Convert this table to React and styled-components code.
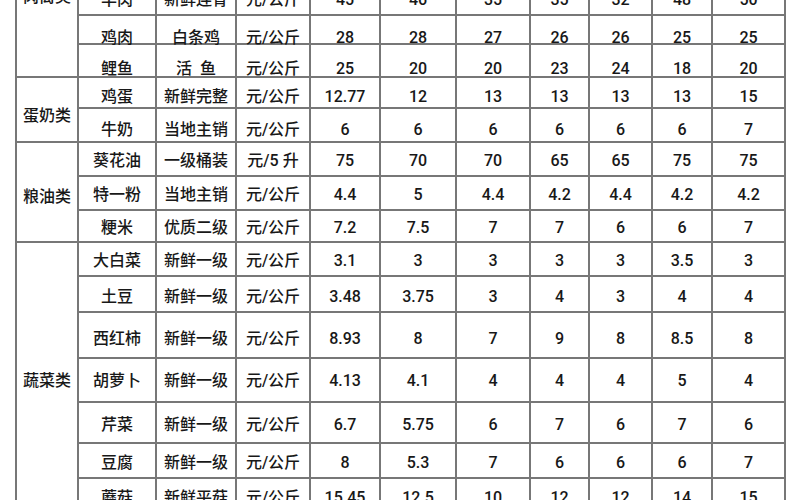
import React from "react";
import styled, { createGlobalStyle } from "styled-components";

const Global = createGlobalStyle`
  html, body { margin: 0; padding: 0; background: #ffffff; overflow: hidden; }
  body { font-family: Roboto, "Noto Sans CJK SC", "Noto Sans", sans-serif; }
`;

const Page = styled.div`
  width: 800px;
  height: 500px;
  overflow: hidden;
  padding-left: 15px;
  box-sizing: border-box;
`;

const Grid = styled.div`
  display: grid;
  margin-top: -85px;
  width: max-content;
  grid-template-columns: 60px 76px 78px 72px 68px 74px 72px 57px 61px 58px 71px;
  grid-template-rows: ${(p) => p.$rows.map((h) => `${h}px`).join(" ")};
  gap: 2px;
  padding: 2px;
  background: #777777;
`;

const Cell = styled.div`
  background: #ffffff;
  display: flex;
  align-items: center;
  justify-content: center;
  padding-top: ${(p) => p.$dy * 2}px;
  box-sizing: border-box;
  font-size: 16px;
  font-weight: 500;
  color: #181818;
  white-space: pre;
  line-height: 1;
`;

const Category = styled(Cell)`
  grid-row: span ${(p) => p.$span};
`;

const groups = [
  {
    name: "肉禽类",
    dy: 0,
    rows: [
      ["猪肉", "精瘦肉", "元/公斤", "32", "30", "28", "30", "28", "30", "32"],
      ["牛肉", "新鲜连骨", "元/公斤", "70", "68", "65", "66", "64", "68", "70"],
      ["羊肉", "新鲜连骨", "元/公斤", "45", "46", "35", "35", "32", "48", "50"],
      ["鸡肉", "白条鸡", "元/公斤", "28", "28", "27", "26", "26", "25", "25"],
      ["鲤鱼", "活  鱼", "元/公斤", "25", "20", "20", "23", "24", "18", "20"],
    ],
  },
  {
    name: "蛋奶类",
    dy: 6,
    rows: [
      ["鸡蛋", "新鲜完整", "元/公斤", "12.77", "12", "13", "13", "13", "13", "15"],
      ["牛奶", "当地主销", "元/公斤", "6", "6", "6", "6", "6", "6", "7"],
    ],
  },
  {
    name: "粮油类",
    dy: 5,
    rows: [
      ["葵花油", "一级桶装", "元/5 升", "75", "70", "70", "65", "65", "75", "75"],
      ["特一粉", "当地主销", "元/公斤", "4.4", "5", "4.4", "4.2", "4.4", "4.2", "4.2"],
      ["粳米", "优质二级", "元/公斤", "7.2", "7.5", "7", "7", "6", "6", "7"],
    ],
  },
  {
    name: "蔬菜类",
    dy: 3,
    rows: [
      ["大白菜", "新鲜一级", "元/公斤", "3.1", "3", "3", "3", "3", "3.5", "3"],
      ["土豆", "新鲜一级", "元/公斤", "3.48", "3.75", "3", "4", "3", "4", "4"],
      ["西红柿", "新鲜一级", "元/公斤", "8.93", "8", "7", "9", "8", "8.5", "8"],
      ["胡萝卜", "新鲜一级", "元/公斤", "4.13", "4.1", "4", "4", "4", "5", "4"],
      ["芹菜", "新鲜一级", "元/公斤", "6.7", "5.75", "6", "7", "6", "7", "6"],
      ["豆腐", "新鲜一级", "元/公斤", "8", "5.3", "7", "6", "6", "6", "7"],
      ["蘑菇", "新鲜平菇", "元/公斤", "15.45", "12.5", "10", "12", "12", "14", "15"],
    ],
  },
];

const rowHeights = [32, 32, 29, 27, 31, 29, 32, 32, 32, 30, 32, 34, 44, 42, 39, 33, 34];
const rowOffsets = [0, 0, 0, 8, 8, 4, 5, 2, 2, 2, 2, 3, 4, 1, 2, 2, 2];

export default function App() {
  let idx = 0;
  return (
    <Page>
      <Global />
      <Grid $rows={rowHeights}>
        {groups.map((g) =>
          g.rows.map((r, i) => {
            const dy = rowOffsets[idx++];
            return (
              <React.Fragment key={g.name + i}>
                {i === 0 && (
                  <Category $span={g.rows.length} $dy={g.dy}>
                    {g.name}
                  </Category>
                )}
                {r.map((v, j) => (
                  <Cell key={j} $dy={dy}>
                    {v}
                  </Cell>
                ))}
              </React.Fragment>
            );
          })
        )}
      </Grid>
    </Page>
  );
}
